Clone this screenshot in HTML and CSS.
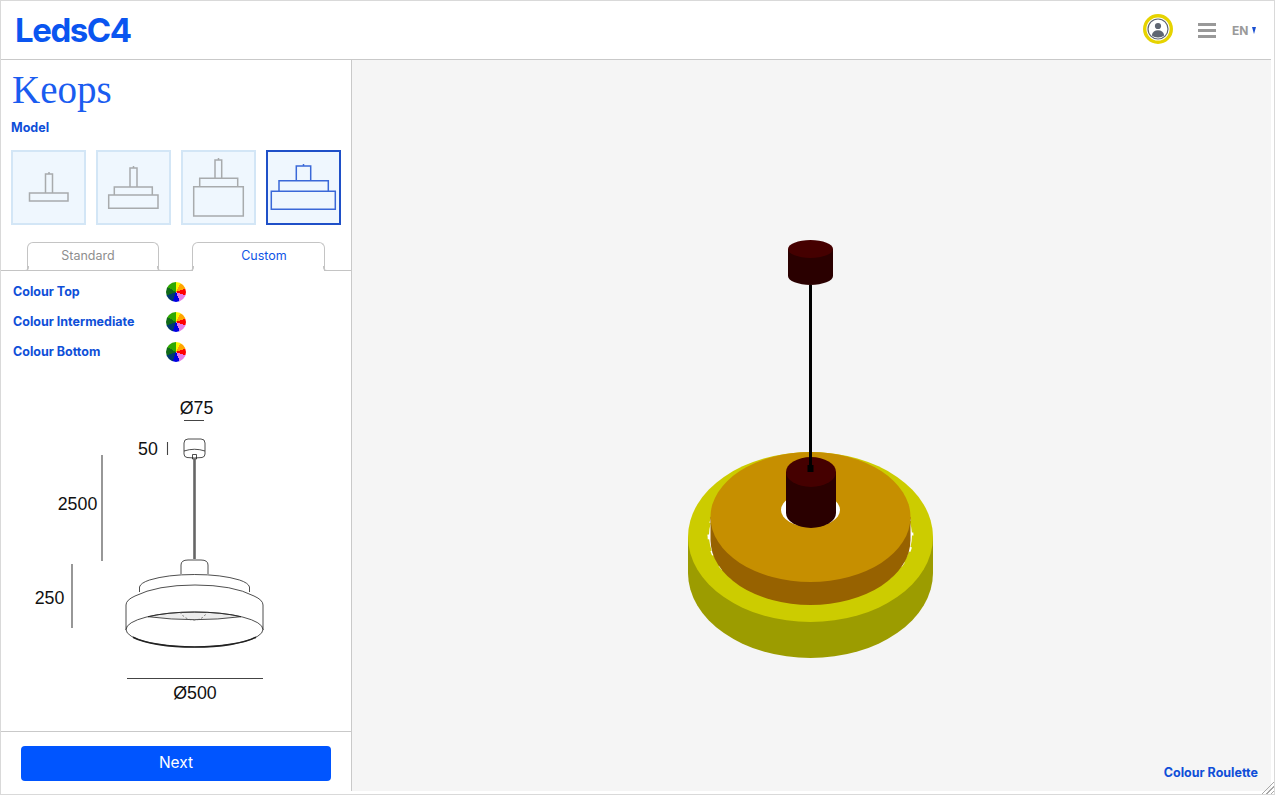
FILE: index.html
```html
<!DOCTYPE html>
<html lang="en">
<head>
<meta charset="utf-8">
<title>Keops</title>
<link rel="stylesheet" href="styles.css">
</head>
<body>
<div class="app">
  <header class="topbar">
    <div class="logo">LedsC4</div>
    <div class="tools">
      <svg class="user" viewBox="0 0 32 32" width="32" height="32">
        <circle cx="16" cy="16" r="13.300" fill="#fff" stroke="#e6d300" stroke-width="3.400"/>
        <circle cx="16" cy="16" r="10" fill="#fff" stroke="#5f6672" stroke-width="1.200"/>
        <circle cx="16" cy="13" r="3.100" fill="#5f6672"/>
        <path d="M9.800 22.500c.6-3.600 3-5.200 6.200-5.200s5.600 1.600 6.200 5.200c-1.600 1.200-3.800 1.900-6.200 1.900s-4.600-.7-6.200-1.900z" fill="#5f6672"/>
      </svg>
      <div class="burger"><span></span><span></span><span></span></div>
      <div class="lang">EN<i class="caret"></i></div>
    </div>
  </header>
  <div class="main">
    <aside class="side">
      <h1 class="title">Keops</h1>
      <div class="model-label">Model</div>
      <div class="thumbs">
        <div class="thumb">
          <svg viewBox="0 0 75 75"><path class="ln" d="M38 22v2M34.500 24h7v19h-7zM18.500 43h38.500v8h-38.500z"/></svg>
        </div>
        <div class="thumb">
          <svg viewBox="0 0 75 75"><path class="ln" d="M37.500 16v2M34 18h7v19h-7zM18.300 37h38v8h-38zM12.700 45h49.300v13.300h-49.300z"/></svg>
        </div>
        <div class="thumb">
          <svg viewBox="0 0 75 75"><path class="ln" d="M37.500 8v2M34 10h6.700v18.300h-6.700zM18.700 28.300h38v8.400h-38zM12.700 36.700h49.600v29.300h-49.600z"/></svg>
        </div>
        <div class="thumb active">
          <svg viewBox="0 0 75 75"><path class="ln blue" d="M37.500 14v2M30.300 16h14.400v14.700h-14.400zM13 41.300v-10.600h49.300v10.600M5.300 41.300h64v18h-64z"/></svg>
        </div>
      </div>
      <nav class="tabs">
        <div class="tab">Standard</div>
        <div class="tab current">Custom</div>
      </nav>
      <div class="colours">
        <div class="colour"><span class="colour-name">Colour Top</span><i class="wheel"></i></div>
        <div class="colour"><span class="colour-name">Colour Intermediate</span><i class="wheel"></i></div>
        <div class="colour"><span class="colour-name">Colour Bottom</span><i class="wheel"></i></div>
      </div>
      <svg class="drawing" viewBox="1 367 350 364">
        <g class="dim-text">
          <text x="196.500" y="414" text-anchor="middle">Ø75</text>
          <text x="148" y="455" text-anchor="middle">50</text>
          <text x="77.500" y="510" text-anchor="middle">2500</text>
          <text x="49.500" y="604" text-anchor="middle">250</text>
          <text x="195" y="699" text-anchor="middle">Ø500</text>
        </g>
        <path class="dim" d="M184 420.500h20M167.500 442v13M102 455v106M72 564v64M127 678.500h136"/>
        <g class="lamp">
          <path d="M184 443q0-4 4-4h13q4 0 4 4v11q0 3-3 3.500q-7.500 1-15 0q-3-.5-3-3.500z"/>
          <path d="M184 451q10.500-3.500 21 0"/>
          <path d="M192.500 454.500h4v4.500h-4z"/>
          <path class="cable" d="M194.500 459v100"/>
          <path d="M181 574v-9q0-5 7-5h13q7 0 7 5v9"/>
          <path d="M139.500 592v-5q1-4 10-7q18-5.500 45-5.500q27 0 45 5.500q9 3 10 7v5"/>
          <path d="M126 630v-25q0-5 9-9q22-11 60-11q38 0 59 11q9 4 9 9v25"/>
          <path class="lens" d="M148 616.700a68.500 17.500 0 0 1 93 0q-46.500 6-93 0z"/>
          <ellipse cx="194.500" cy="629.500" rx="68.500" ry="17.500"/>
          <path class="thick" d="M133 637.200a68.500 17.500 0 0 0 123 0"/>
          <path class="dots" d="M180 612q5 8 14 8q9 0 13-8"/>
        </g>
      </svg>
      <div class="actions"><button class="next" type="button">Next</button></div>
    </aside>
    <section class="viewer">
      <svg class="scene" viewBox="352 60 919 731">
        <path d="M788 249v27a22.500 9 0 0 0 45 0v-27z" fill="#2a0000"/>
        <ellipse cx="810.500" cy="249" rx="22.500" ry="9" fill="#450000"/>
        <path d="M688 537v36a122.500 85 0 0 0 245 0v-36z" fill="#9c9c00"/>
        <ellipse cx="810.500" cy="537" rx="122.500" ry="85" fill="#cccc00"/>
        <ellipse cx="810.500" cy="535.500" rx="103" ry="68" fill="#fff" stroke="#cccc00" stroke-width="3" stroke-dasharray="12 5"/>
        <path d="M710.500 517v23a100 65 0 0 0 200 0v-23z" fill="#976200"/>
        <ellipse cx="810.500" cy="517" rx="100" ry="65" fill="#c68f00"/>
        <ellipse cx="810.500" cy="510" rx="29.500" ry="17" fill="#fff"/>
        <path d="M786 472v41a25 15 0 0 0 50 0v-41z" fill="#2a0000"/>
        <ellipse cx="811" cy="472" rx="25" ry="15" fill="#450000"/>
        <path d="M810.500 285v184" stroke="#000" stroke-width="3"/>
        <rect x="807.500" y="465" width="6" height="7" fill="#000"/>
      </svg>
      <a class="roulette">Colour Roulette</a>
    </section>
  </div>
  <i class="grip"></i>
</div>
</body>
</html>
```

FILE: styles.css
```css
* { box-sizing: border-box; }
html, body { margin: 0; padding: 0; background: #fff; }
body { font-family: Inter, "Liberation Sans", sans-serif; color: #0a50e6; }

.app {
  position: relative;
  width: 1275px;
  height: 795px;
  border: 1px solid #d9d9d9;
  padding: 0 3px 3px 0;
  display: flex;
  flex-direction: column;
  overflow: hidden;
}

.topbar {
  height: 59px;
  flex: none;
  border-bottom: 1px solid #c9c9c9;
  display: flex;
  align-items: center;
  justify-content: space-between;
  padding: 0 13px 0 14px;
}
.logo { font-size: 33px; font-weight: 700; letter-spacing: -1.450px; color: #0a55f0; }
.tools { display: flex; align-items: center; }
.user { display: block; margin-right: 24px; margin-top: -2px; }
.burger { width: 18px; display: flex; flex-direction: column; gap: 3px; margin-right: 16px; }
.burger span { height: 3px; background: #999; display: block; }
.lang { display: flex; align-items: center; gap: 4px; font-size: 12px; font-weight: 700; color: #9a9a9a; width: 26px; }
.caret { width: 0; height: 0; border-left: 2.500px solid transparent; border-right: 2.500px solid transparent; border-top: 7px solid #1a4fd0; }

.main { flex: 1; display: flex; min-height: 0; }

.side {
  width: 351px;
  flex: none;
  border-right: 1px solid #c9c9c9;
  display: flex;
  flex-direction: column;
}
.title {
  margin: 0;
  height: 50px;
  padding-left: 11px;
  font-family: "Liberation Serif", serif;
  font-weight: 400;
  font-size: 39px;
  line-height: 60px;
  color: #1a5cf0;
}
.model-label { height: 40px; padding: 10px 0 0 10px; font-size: 12.500px; font-weight: 700; line-height: 15px; color: #0f4fd8; }

.thumbs { display: flex; gap: 10px; padding-left: 10px; margin-bottom: 17px; }
.thumb { width: 75px; height: 75px; background: #eff7fe; border: 2px solid #d3e6f6; }
.thumb svg { display: block; width: 75px; height: 75px; margin: -2px; }
.ln { fill: none; stroke: #a8abad; stroke-width: 1.500; }
.thumb.active { border-color: #1f50c8; }
.blue { stroke: #3a68d8; }

.tabs { display: flex; height: 29px; flex: none; padding-left: 26px; gap: 33px; border-bottom: 1px solid #c4c4c4; }
.tab {
  position: relative;
  width: 132px;
  height: 28px;
  border: 1px solid #c4c4c4;
  border-bottom: 0;
  border-radius: 6px 6px 0 0;
  font-size: 12.500px;
  line-height: 25px;
  text-align: center;
  color: #8e8e8e;
  padding-right: 10px;
}
.tab::before, .tab::after {
  content: "";
  position: absolute;
  bottom: -1px;
  width: 4px;
  height: 4px;
  border-bottom: 1px solid #c4c4c4;
}
.tab::before { left: -4px; border-right: 1px solid #c4c4c4; border-bottom-right-radius: 4px; }
.tab::after { right: -4px; border-left: 1px solid #c4c4c4; border-bottom-left-radius: 4px; }
.tab.current { background: #fff; height: 29px; color: #0f55e6; width: 133px; padding: 0 0 0 11px; }
.tab.current::before, .tab.current::after { bottom: 0; }

.colours { padding: 6px 0 0 12px; flex: none; height: 96px; }
.colour { display: flex; align-items: center; height: 30px; }
.colour-name { width: 153px; font-size: 12.500px; font-weight: 700; color: #0f4fd8; margin-top: -2px; }
.wheel {
  width: 20px;
  height: 20px;
  border-radius: 50%;
  background: conic-gradient(from 0deg, #f7f700 0 28deg, #ffa500 28deg 70deg, #f00 70deg 110deg, #e67ae6 110deg 158deg, #0000e0 158deg 200deg, #003a6e 200deg 250deg, #0f6a18 250deg 300deg, #2fa800 300deg 360deg);
}

.drawing { display: block; width: 350px; height: 364px; flex: none; }
.dim-text { font-family: "Liberation Sans", sans-serif; font-size: 17.800px; fill: #111; }
.dim { fill: none; stroke: #444; stroke-width: 1.100; }
.lamp path, .lamp ellipse { fill: none; stroke: #222; stroke-width: .8; }
.lamp .cable { stroke: #666; stroke-width: 2.600; }
.lamp .thick { stroke-width: 1.600; }
.lamp .dots { stroke-dasharray: 2 2; stroke: #555; }
.lamp .lens { fill: #ececec; }

.actions { flex: 1; border-top: 1px solid #c9c9c9; padding: 14px 20px 0; }
.next {
  display: block;
  width: 100%;
  height: 35px;
  border: 0;
  border-radius: 4px;
  padding: 0 0 2px;
  background: #0055ff;
  color: #fff;
  font: 400 15.500px Inter, "Liberation Sans", sans-serif;
}

.viewer { position: relative; flex: 1; background: #f5f5f5; min-width: 0; }
.scene { display: block; width: 100%; height: 100%; }
.roulette { position: absolute; right: 13px; bottom: 11px; font-size: 12.500px; font-weight: 700; line-height: 15px; color: #0f4fd8; }

.grip {
  position: absolute;
  right: 0;
  bottom: 0;
  width: 14px;
  height: 14px;
  background: repeating-linear-gradient(135deg, transparent 0 2px, #a8a8a8 2px 3px);
  clip-path: polygon(100% 0, 100% 100%, 0 100%);
}
```
